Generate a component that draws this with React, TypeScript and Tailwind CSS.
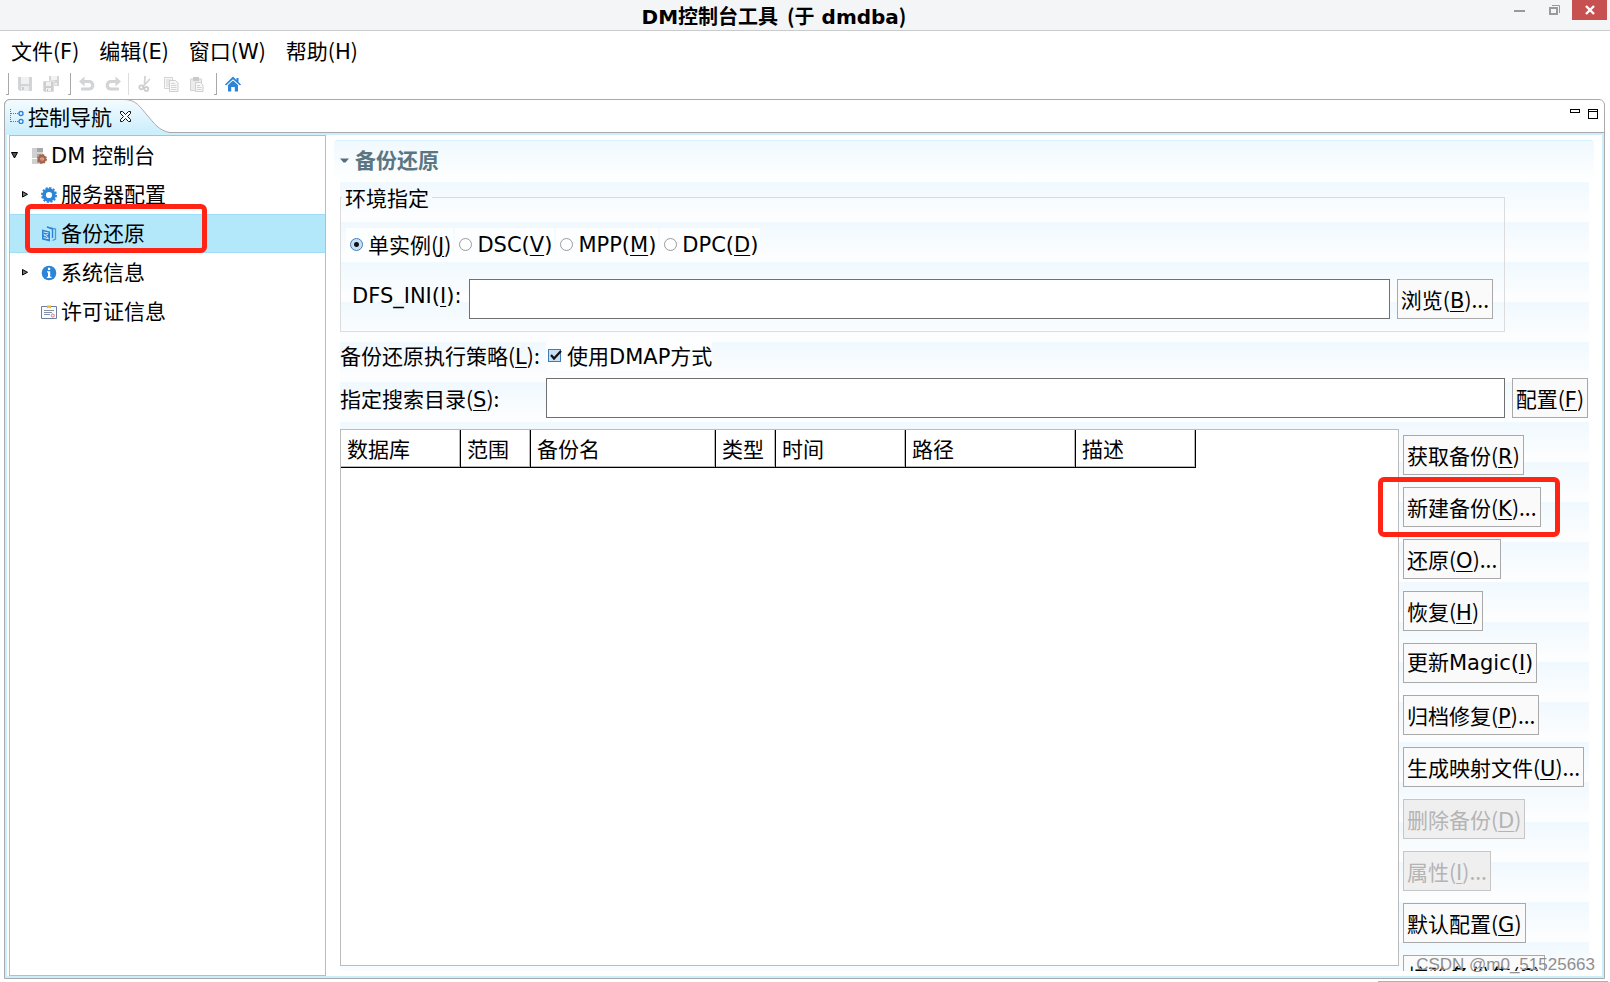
import { useState } from "react";
import type { ReactNode } from "react";

/* Label with a mnemonic in brackets: "获取备份(R)". */
function Mnemonic({ text, k, tail = "", latin = false }: { text: string; k: string; tail?: string; latin?: boolean }) {
  const font = latin ? "" : "font-['Noto_Sans_CJK_SC',sans-serif]";
  return (
    <span className="whitespace-nowrap">
      {text}
      <span className={font}>(</span>
      <span className="underline decoration-1 underline-offset-3">{k}</span>
      <span className={font}>){tail}</span>
    </span>
  );
}

function PushButton({ children, disabled = false }: { children: ReactNode; disabled?: boolean }) {
  return (
    <button
      type="button"
      disabled={disabled}
      className="h-10 flex-none whitespace-nowrap border border-[#a9a9a9] bg-[#fafafa] px-[3px] leading-[38px] text-black disabled:border-[#c6c6c6] disabled:bg-[#efefef] disabled:text-[#b4b4b4]"
    >
      {children}
    </button>
  );
}

function Grip() {
  return <span className="h-[22px] w-[3px] border-b border-r border-[#a8a8a8]" />;
}

function ToolButton({ label, children, disabled = true }: { label: string; children: ReactNode; disabled?: boolean }) {
  return (
    <button type="button" aria-label={label} disabled={disabled} className="size-4">
      <svg viewBox="0 0 16 16" className="size-4">{children}</svg>
    </button>
  );
}

function Toolbar() {
  return (
    <div className="flex h-7 items-center pb-[3px] pl-1.5 pt-px">
      <Grip />
      <div className="flex gap-2.5 pl-2 pr-[9px]">
        <ToolButton label="保存">
          <path d="M1 1h14v14H3l-2-2z" fill="#d2d4d6" />
          <path d="M4 1h8v7H4z" fill="#f1f1f1" />
          <path d="M4 10h8v5H4z" fill="#ececec" />
          <path d="M5 11h2v3H5z" fill="#cbcdcf" />
        </ToolButton>
        <ToolButton label="全部保存">
          <path d="M6 0h10v10H6z" fill="#d2d4d6" />
          <path d="M8 0h6v4H8z" fill="#f3f3f3" />
          <path d="M12 7h2v2h-2z" fill="#eee" />
          <path d="M0 5h11v11H1l-1-1z" fill="#cccecf" stroke="#fff" strokeWidth=".6" />
          <path d="M3 6h5v4H3zM3 12h5v3H3z" fill="#f1f1f1" />
          <path d="M4 13h1v2H4z" fill="#c2c4c6" />
        </ToolButton>
      </div>
      <Grip />
      <div className="flex gap-2.5 pl-2 pr-[7px]">
        <ToolButton label="撤消">
          <path d="M3.500 5.500h7a3.800 3.800 0 0 1 0 7.500H2" fill="none" stroke="#d2d4d6" strokeWidth="3.200" />
          <path d="M0 5.500 5.500 .5v10z" fill="#d2d4d6" />
        </ToolButton>
        <ToolButton label="重做">
          <path d="M12.500 5.500h-7a3.800 3.800 0 0 0 0 7.500H14" fill="none" stroke="#d2d4d6" strokeWidth="3.200" />
          <path d="M16 5.500 10.500 .5v10z" fill="#d2d4d6" />
        </ToolButton>
      </div>
      <span className="h-[22px] w-px bg-[#dcdcdc]" />
      <div className="flex gap-2.5 pl-2 pr-[9px]">
        <ToolButton label="剪切">
          <path d="M8 0 7.500 9M13 3 6 10.500" stroke="#d3d3d3" strokeWidth="1.800" fill="none" />
          <circle cx="4.300" cy="11.300" r="2" fill="none" stroke="#cbcdcf" strokeWidth="1.800" />
          <circle cx="9.300" cy="13" r="2" fill="none" stroke="#cbcdcf" strokeWidth="1.800" />
        </ToolButton>
        <ToolButton label="复制">
          <path d="M1.500 1.500h8v11h-8z" fill="#f8f8f8" stroke="#d4d4d4" />
          <path d="M3 4h5M3 6h3M3 8h3M3 10h3" stroke="#d4d4d4" />
          <path d="M6.500 4.500h6l2.500 2.500v8.500H6.500z" fill="#f8f8f8" stroke="#cfcfcf" />
          <path d="M8 7.500h4M8 9.500h5.500M8 11.500h5.500M8 13.500h5.500" stroke="#d4d4d4" />
        </ToolButton>
        <ToolButton label="粘贴">
          <path d="M1.500 3h11v11.500h-11z" fill="#ececec" stroke="#d4d4d4" />
          <path d="M4 1h6v4H4z" fill="#c8cacc" />
          <path d="M6.500 6.500h5l2.500 2.500v6.500H6.500z" fill="#f8f8f8" stroke="#cfcfcf" />
          <path d="M8 9.500h3M8 11.500h4.500M8 13.500h4.500" stroke="#d2d2d2" />
        </ToolButton>
      </div>
      <Grip />
      <div className="flex pl-2">
        <ToolButton label="主页" disabled={false}>
          <path d="M8 .5 11.500 4V2h2v4L16 8.600l-1 1L8 3.200 1 9.600l-1-1z" fill="#2b84d8" />
          <path d="M8 4.600 13 9v6.500H9.800V11H6.200v4.500H3V9z" fill="#2b84d8" />
        </ToolButton>
      </div>
    </div>
  );
}

const icons: Record<string, ReactNode> = {
  server: (
    <>
      <path d="M1 0h11v4.500H1zM1 5.500h11v4.500H1zM1 11h11v4.500H1z" fill="#a8a8a8" />
      <path d="M1 0h5v4.500H1zM1 5.500h5v4.500H1zM1 11h5v4.500H1z" fill="#cfcfcf" />
      <circle cx="11" cy="11" r="3" fill="none" stroke="#a86449" strokeWidth="2.600" />
      <circle cx="11" cy="11" r="4.400" fill="none" stroke="#a86449" strokeWidth="1.200" strokeDasharray="1.730 1.730" />
      <circle cx="11" cy="11" r="1.500" fill="#cf957c" />
    </>
  ),
  gear: (
    <>
      <circle cx="8" cy="8" r="4.900" fill="none" stroke="#2b84d8" strokeWidth="3.600" />
      <circle cx="8" cy="8" r="7.100" fill="none" stroke="#2b84d8" strokeWidth="1.800" strokeDasharray="2.200 1.518" />
    </>
  ),
  backup: (
    <>
      <path d="M1 3.500 9 5.500v10L1 13.500z" fill="#2b84d8" />
      <path d="m2.500 6 5 1M2.500 8l5 4M2.500 11.500l5 1.200M3 9.500l4-1" stroke="#d8f0fc" strokeWidth="1" />
      <path d="M6 1.200 14.500 3v10l-3 1.500" fill="none" stroke="#4a98de" strokeWidth="1.300" />
      <path d="M6 .8 11.500 3v9" fill="none" stroke="#2b84d8" strokeWidth="1.400" />
    </>
  ),
  info: (
    <>
      <circle cx="8" cy="8" r="7.300" fill="#2b84d8" />
      <path d="M7 2.800h2.200V5H7zM6 6.300h3.200v5.400h1.300V13H5.800v-1.300H7V7.600H6z" fill="#fff" />
    </>
  ),
  licence: (
    <>
      <path d="M.5 2.500h15v12H.5z" fill="#fbfcff" stroke="#6b7f9c" />
      <path d="M6 1.500h4v3L8 3.500l-2 1z" fill="#f0b428" />
      <path d="M3 6.500h10M3 8.500h8M3 10.500h6" stroke="#8492a8" />
      <circle cx="11.800" cy="11.500" r="1.500" fill="#fff" stroke="#e26a7c" />
    </>
  ),
};

function TreeItem({ icon, label, state, child = true, selected = false, marked = false }: {
  icon: string; label: string; state?: "open" | "closed"; child?: boolean; selected?: boolean; marked?: boolean;
}) {
  const indent = child ? "pl-2.5" : "";
  const row = selected ? "border-[#9fdcf5] bg-[#b3e7fa]" : "border-transparent";
  return (
    <li role="treeitem" aria-selected={selected} className={`relative flex h-[39px] items-center border-y ${indent} ${row}`}>
      <span className="flex w-[21px] items-center">
        {state && (
          <svg viewBox="0 0 9 9" className="size-[9px]">
            {state === "open"
              ? <path d="M1.500 1.500h6L4.500 7z" fill="#555" stroke="#000" />
              : <path d="M2.500 1.500v5.500l5-2.700z" fill="#777" stroke="#000" />}
          </svg>
        )}
      </span>
      <svg viewBox="0 0 16 16" className="mr-1 size-4">{icons[icon]}</svg>
      <span className="whitespace-nowrap pt-px leading-8">{label}</span>
      {marked && <span className="pointer-events-none absolute -top-[11px] left-[15px] h-[49px] w-[182px] rounded-md border-[5px] border-[#ff2414]" />}
    </li>
  );
}

const columns: [string, string][] = [
  ["数据库", "w-[120px]"],
  ["范围", "w-[70px]"],
  ["备份名", "w-[185px]"],
  ["类型", "w-[60px]"],
  ["时间", "w-[130px]"],
  ["路径", "w-[170px]"],
  ["描述", "w-[120px]"],
];

const actions = [
  { text: "获取备份", k: "R" },
  { text: "新建备份", k: "K", tail: "...", marked: true },
  { text: "还原", k: "O", tail: "..." },
  { text: "恢复", k: "H" },
  { text: "更新Magic", k: "I", latin: true },
  { text: "归档修复", k: "P", tail: "..." },
  { text: "生成映射文件", k: "U", tail: "..." },
  { text: "删除备份", k: "D", disabled: true },
  { text: "属性", k: "I", tail: "...", disabled: true },
  { text: "默认配置", k: "G" },
  { text: "校验备份集", k: "C" },
];

const modes = [
  { text: "单实例", k: "J", latin: false },
  { text: "DSC", k: "V", latin: true },
  { text: "MPP", k: "M", latin: true },
  { text: "DPC", k: "D", latin: true },
];

const inputStyle = "h-10 min-w-0 flex-1 border border-[#707070] bg-white px-2 outline-none";

export default function App() {
  const [mode, setMode] = useState("单实例");
  const [dmap, setDmap] = useState(true);

  return (
    <div className="relative flex h-screen flex-col overflow-hidden bg-white pb-[3px] font-['DejaVu_Sans','Noto_Sans_CJK_SC',sans-serif] text-[21px] text-black">
      <header className="relative flex h-[31px] flex-none items-start justify-center border-b border-[#c9cbcc] bg-[#f4f5f7] pr-[62px]">
        <h1 className="whitespace-pre pt-px text-[20px] font-bold leading-[30px]">
          DM控制台工具 <span className="ml-0.5 font-['Noto_Sans_CJK_SC',sans-serif]">(</span>于 dmdba<span className="font-['Noto_Sans_CJK_SC',sans-serif]">)</span>
        </h1>
        <div className="absolute right-[3px] top-0 flex">
          <button type="button" aria-label="最小化" className="flex h-5 w-[35px] items-center justify-center">
            <svg viewBox="0 0 11 12" className="h-3 w-[11px]"><path d="M0 6h11v2H0z" fill="#9a9a9a" /></svg>
          </button>
          <button type="button" aria-label="还原窗口" className="flex h-5 w-[35px] items-center justify-center">
            <svg viewBox="0 0 12 12" className="size-3">
              <path d="M1 4h7v6H1z" fill="none" stroke="#9a9a9a" strokeWidth="2" />
              <path d="M3 1.500h7.500V9" fill="none" stroke="#9a9a9a" />
            </svg>
          </button>
          <button type="button" aria-label="关闭" className="flex h-5 w-[35px] items-center justify-center bg-[#c75050]">
            <svg viewBox="0 0 10 10" className="size-2.5"><path d="m1 1 8 8M9 1 1 9" stroke="#fff" strokeWidth="2.400" /></svg>
          </button>
        </div>
      </header>

      <nav className="flex h-10 flex-none items-center gap-5 pb-px pl-[11px]">
        {[["文件", "F"], ["编辑", "E"], ["窗口", "W"], ["帮助", "H"]].map(([text, k]) => (
          <button key={k} type="button" className="whitespace-nowrap leading-8">
            {text}<span className="font-['Noto_Sans_CJK_SC',sans-serif]">(</span>{k}<span className="font-['Noto_Sans_CJK_SC',sans-serif]">)</span>
          </button>
        ))}
      </nav>

      <Toolbar />

      <main className="ml-1 mr-[5px] flex min-h-0 flex-1 flex-col rounded-t-md border border-[#aaaaaa]">
        <div className="relative flex h-[33px] flex-none items-center justify-between border-b border-[#aaaaaa]">
          <svg viewBox="0 0 166 34" className="absolute -left-px -top-px h-[34px] w-[166px]">
            <defs>
              <linearGradient id="tab" x1="0" y1="0" x2="0" y2="1">
                <stop offset="0" stopColor="#f4fbff" />
                <stop offset="1" stopColor="#cbeefc" />
              </linearGradient>
            </defs>
            <path d="M1 34V6Q1 1 6 1H120C132 1 136 8 143 16S155 32 166 33.500V34z" fill="url(#tab)" />
            <path d="M.5 34V6Q1 .5 6 .5H120C132 .5 136 8 143 16S155 32 166 33.500" fill="none" stroke="#aaaaaa" />
          </svg>
          <div role="tab" aria-selected="true" className="relative flex items-center pl-[5px]">
            <svg viewBox="0 0 14 16" className="mr-1 h-4 w-3.5">
              <path d="M.5 1v13M1 5.500h8M1 13.500h8" fill="none" stroke="#2b84d8" strokeDasharray="1 1" />
              <circle cx="11" cy="5.500" r="2" fill="#fff" stroke="#2b84d8" strokeWidth="1.400" />
              <circle cx="11" cy="13.500" r="2" fill="#fff" stroke="#2b84d8" strokeWidth="1.400" />
            </svg>
            <span className="whitespace-nowrap pt-1 leading-[30px]">控制导航</span>
            <button type="button" aria-label="关闭视图" className="ml-2 flex">
              <svg viewBox="0 0 11 11" className="size-[11px]">
                <path d="M.5.5h2l3 3 3-3h2v2l-3 3 3 3v2h-2l-3-3-3 3h-2v-2l3-3-3-3z" fill="#fff" stroke="#111" />
              </svg>
            </button>
          </div>
          <div className="flex items-start gap-2 pb-3 pr-1.5 pt-2">
            <button type="button" aria-label="最小化视图" className="h-1 w-2.5 border border-black" />
            <button type="button" aria-label="最大化视图" className="flex size-2.5 flex-col items-stretch justify-start border border-black">
              <span className="h-0.5 border-b border-black" />
            </button>
          </div>
        </div>

        <div className="flex min-h-0 flex-1 border-2 border-[#cdeffd]">
          <aside className="ml-0.5 w-[317px] flex-none border border-[#bcbcbc] bg-white">
            <ul role="tree">
              <TreeItem icon="server" label="DM 控制台" state="open" child={false} />
              <TreeItem icon="gear" label="服务器配置" state="closed" />
              <TreeItem icon="backup" label="备份还原" selected marked />
              <TreeItem icon="info" label="系统信息" state="closed" />
              <TreeItem icon="licence" label="许可证信息" />
            </ul>
          </aside>

          <section className="flex min-w-0 flex-1 flex-col px-2 pb-[5px] pt-[5px]">
            <div className="flex h-[42px] flex-none items-center rounded-t border-t border-[#d9f3fe] bg-linear-to-b from-[#f0f9fe] to-white pb-0.5 pl-1.5">
              <svg viewBox="0 0 9 5" className="mr-1.5 h-[5px] w-[9px]"><path d="M0 .5h9L5.500 4.500h-2z" fill="#55707d" /></svg>
              <h2 className="font-bold leading-8 text-[#5b7683]">备份还原</h2>
            </div>

            <div className="ml-1.5 mr-[5px] flex min-h-0 flex-1 flex-col bg-[linear-gradient(#f0f9fe,#fefeff)] bg-[length:100%_40px] pt-px">
              <fieldset className="mr-[84px] flex-none border border-[#dcdcdc] pb-3 pl-[5px] pr-[11px]">
                <legend className="-ml-1 px-[3px] pt-1 leading-6">环境指定</legend>
                <div className="mt-[17px] flex h-8 items-center gap-0.5">
                  {modes.map((m) => (
                    <label key={m.k} className="flex h-8 items-center bg-[#fcfeff] pl-1 pr-0.5">
                      <input
                        type="radio"
                        name="mode"
                        checked={mode === m.text}
                        onChange={() => setMode(m.text)}
                        className="mr-[5px] size-[13px] flex-none appearance-none rounded-full border border-[#9a9a9a] bg-white checked:border-[#3f7cb8] checked:bg-[radial-gradient(circle,#111_2px,#c8e0f6_3px)]"
                      />
                      <span className="pt-0.5 leading-8"><Mnemonic text={m.text} k={m.k} latin={m.latin} /></span>
                    </label>
                  ))}
                </div>
                <div className="mt-[19px] flex items-start gap-[7px] pl-1.5">
                  <label htmlFor="dfs" className="pt-px leading-8"><Mnemonic text="DFS_INI" k="I" tail=":" latin /></label>
                  <input id="dfs" type="text" className={inputStyle} />
                  <PushButton><Mnemonic text="浏览" k="B" tail="..." /></PushButton>
                </div>
              </fieldset>

              <div className="mt-2.5 flex h-7 flex-none items-center">
                <span className="w-[206px] flex-none leading-8"><Mnemonic text="备份还原执行策略" k="L" tail=":" /></span>
                <label className="flex items-center bg-[#fcfeff] pl-0.5">
                  <span className="relative mb-0.5 mr-1.5 flex">
                    <input
                      type="checkbox"
                      checked={dmap}
                      onChange={(e) => setDmap(e.target.checked)}
                      className="size-[13px] appearance-none border border-[#9a9a9a] bg-white checked:border-[#3f7cb8] checked:bg-[#c8e0f6]"
                    />
                    {dmap && (
                      <svg viewBox="0 0 15 13" className="pointer-events-none absolute left-0 top-0 h-[13px] w-[15px]">
                        <path d="m3 6 3 3.500L13 2" fill="none" stroke="#111" strokeWidth="2.200" />
                      </svg>
                    )}
                  </span>
                  <span className="whitespace-nowrap pt-px leading-7">使用DMAP方式</span>
                </label>
              </div>

              <div className="mr-px mt-2 flex flex-none items-center">
                <label htmlFor="search" className="w-[206px] flex-none pt-0.5 leading-8"><Mnemonic text="指定搜索目录" k="S" tail=":" /></label>
                <input id="search" type="text" className={`mr-[7px] ${inputStyle}`} />
                <PushButton><Mnemonic text="配置" k="F" /></PushButton>
              </div>

              <div className="mt-[11px] flex min-h-0 flex-1">
                <div className="mb-[5px] min-w-0 flex-1 overflow-hidden border border-[#bcbcbc] bg-white">
                  <table className="w-[855px] table-fixed border-separate border-spacing-0">
                    <thead>
                      <tr>
                        {columns.map(([name, width]) => (
                          <th
                            key={name}
                            scope="col"
                            className={`${width} h-[38px] border-b border-r border-black p-0 pl-1.5 pt-[3px] text-left font-normal leading-8 shadow-[inset_-1px_-1px_#b8b8b8]`}
                          >
                            {name}
                          </th>
                        ))}
                      </tr>
                    </thead>
                    <tbody />
                  </table>
                </div>
                <div className="flex w-[190px] flex-none flex-col items-start gap-3 overflow-y-clip pl-1 pt-1.5">
                  {actions.map((a) => (
                    <div key={a.text} className="relative flex flex-none">
                      <PushButton disabled={a.disabled}>
                        <Mnemonic text={a.text} k={a.k} tail={a.tail} latin={a.latin} />
                      </PushButton>
                      {a.marked && <span className="pointer-events-none absolute -left-[25px] -top-2.5 h-[60px] w-[182px] rounded-md border-[5px] border-[#ff2414]" />}
                    </div>
                  ))}
                </div>
              </div>
            </div>
          </section>
        </div>
      </main>
      <span className="absolute bottom-0 right-0.5 h-px w-[230px] bg-[#b0b0b0]" />
      <span className="absolute bottom-[7px] right-[15px] whitespace-nowrap font-['Liberation_Sans',sans-serif] text-[17px] leading-5 text-[#8f8f8f]">CSDN @m0_51525663</span>
    </div>
  );
}
